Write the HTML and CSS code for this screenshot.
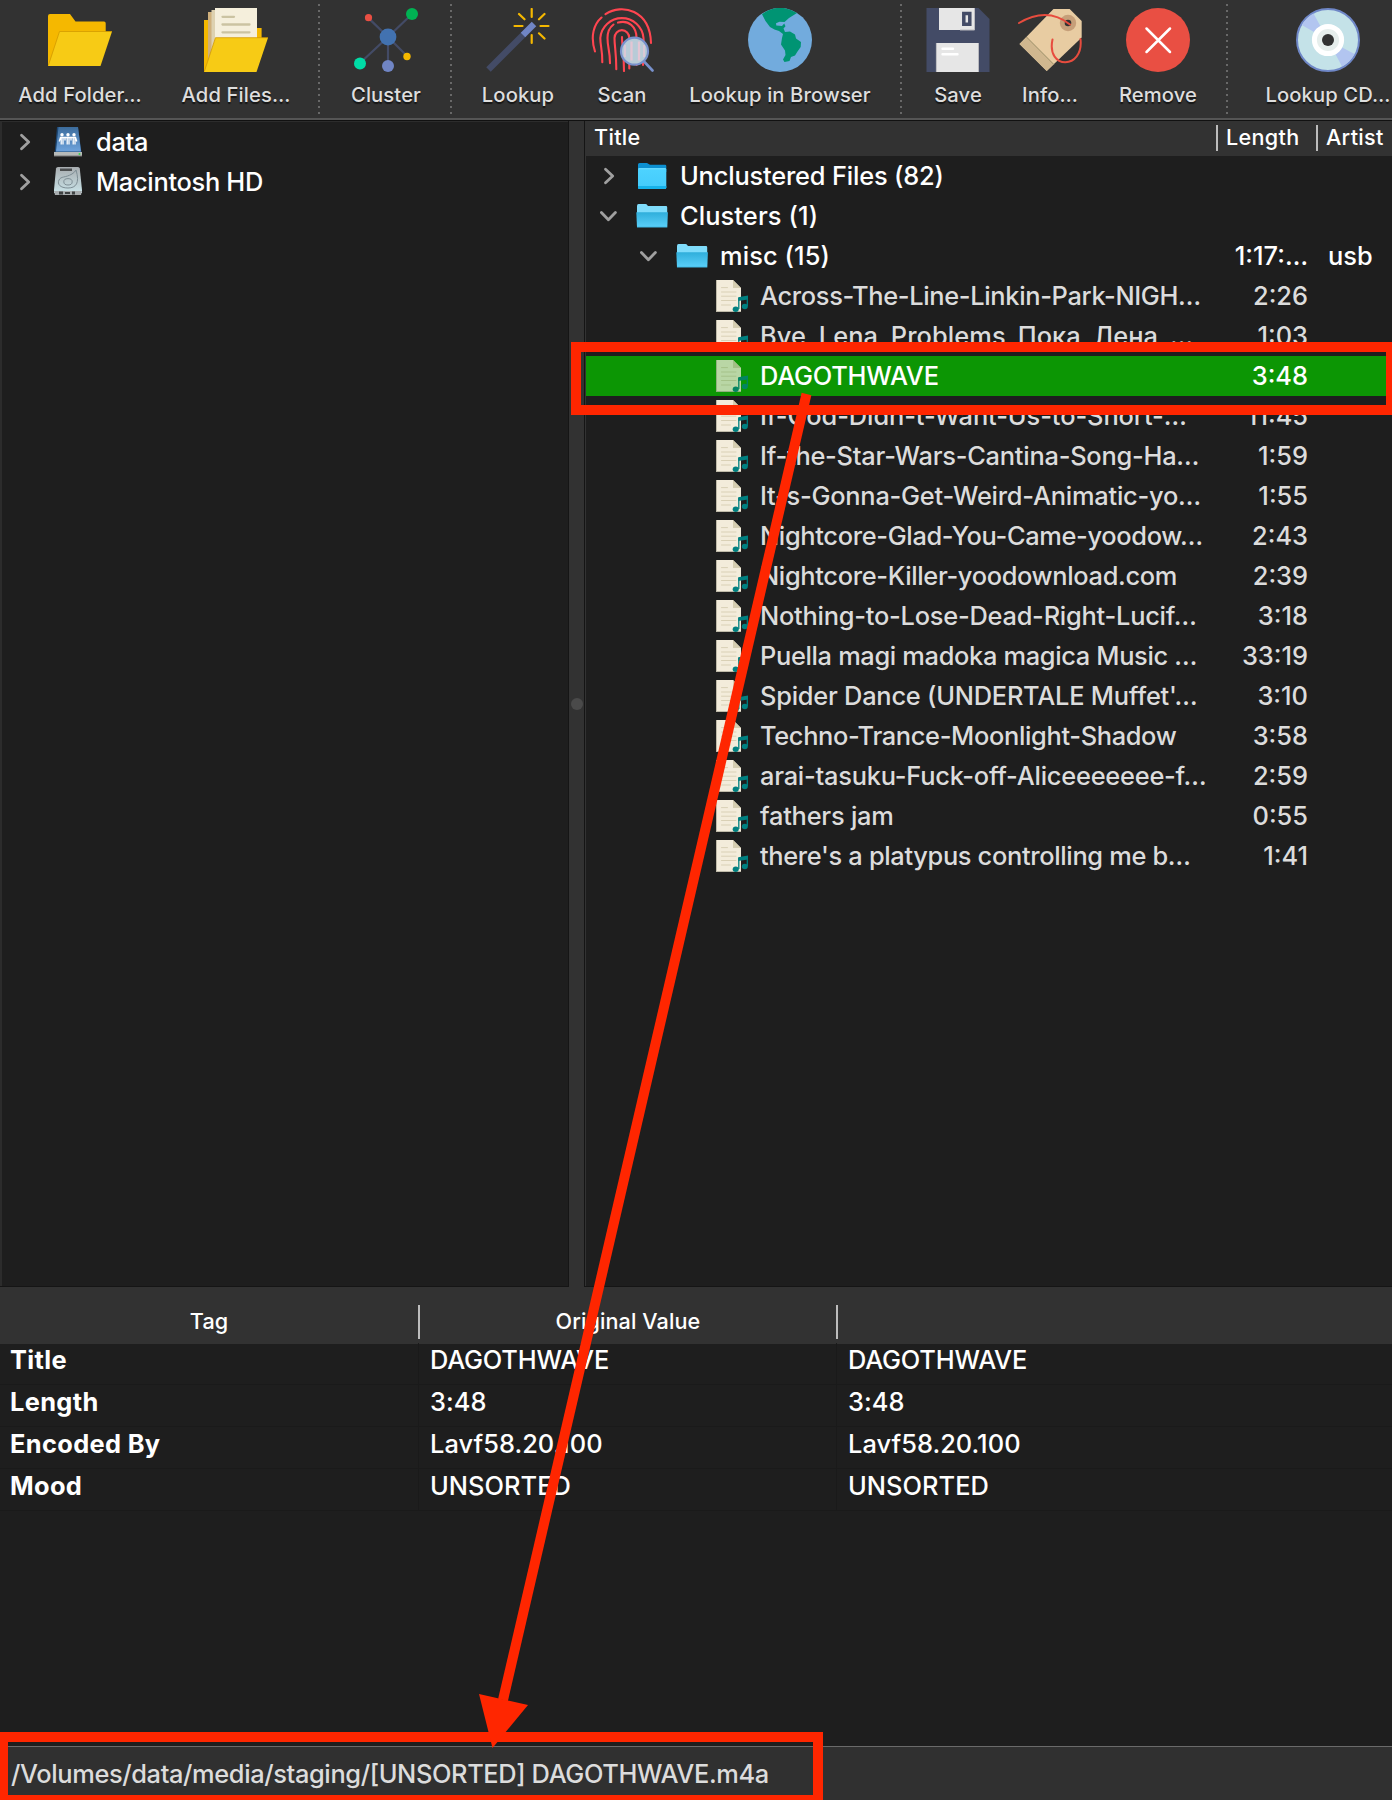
FILE: index.html
```html
<!DOCTYPE html>
<html lang="en">
<head>
<meta charset="utf-8">
<title>Tagger</title>
<link rel="stylesheet" href="styles.css">
</head>
<body>
<svg class="defs" width="0" height="0" aria-hidden="true">
  <symbol id="right" viewBox="0 0 18 18"><path d="M5.500 2.200 12.700 9 5.500 15.800" fill="none" stroke="#a0a0a0" stroke-width="2.800" stroke-linecap="round" stroke-linejoin="round"/></symbol>
  <symbol id="down" viewBox="0 0 18 18"><path d="M1.400 5.500 8.400 12.700 15.400 5.500" fill="none" stroke="#a0a0a0" stroke-width="2.800" stroke-linecap="round" stroke-linejoin="round"/></symbol>
  <symbol id="folder" viewBox="0 0 32 32"><path d="M2 4.500Q2 3 3.500 3H11l3 1.800H29Q30.300 4.800 30.300 6V12H2Z" fill="#0c8fd0"/><rect x="2" y="8" width="28.300" height="21" rx="1.500" fill="url(#blue)"/><path d="M2 26v1.500q0 1.500 1.500 1.500h25.300q1.500 0 1.500-1.500V26Z" fill="#16b2ea"/><path d="M2.500 8.800h27.300" stroke="#6fdcff"/></symbol>
  <symbol id="open" viewBox="0 0 32 32"><path d="M1 6q0-2 1.500-2H9.500q1.200 0 1.800 1.200.6.900 1.800.9H30q1.200 0 1.200 1.200V14H1Z" fill="#7fdcfb"/><path d="M.3 12.200H31.900L31.300 27.500H1Z" fill="url(#blue2)"/></symbol>
  <symbol id="song" viewBox="0 0 32 32"><path d="M0 0H17L25 8V32H0Z" fill="#f3ecdb"/><path d="M17 0 25 8H17Z" fill="#d5cdb0"/><path d="M0 31.500H25M.5 0V32" stroke="#aaa594" opacity=".7"/><path d="M5.500 7.600h6M5.500 12h14.500M5.500 16.200h14.500M5.500 20.500h14.500M5.500 25h9" stroke="#d9d0b5" stroke-width="1" stroke-linecap="round"/><path d="M22.800 29V18.600L31.300 16.800V26" fill="none" stroke="#008080" stroke-width="1.300"/><path d="M22.200 17.200 32 15.600V19.500L22.200 21Z" fill="#008080"/><ellipse cx="19.700" cy="29.200" rx="3" ry="2.700" fill="#008080"/><ellipse cx="28.800" cy="26.500" rx="3" ry="2.700" fill="#008080"/></symbol>
  <defs>
    <linearGradient id="blue" x2="0" y2="1"><stop stop-color="#4ed3ff"/><stop offset="1" stop-color="#43cbfb"/></linearGradient>
    <linearGradient id="blue2" x2="0" y2="1"><stop stop-color="#2faedb"/><stop offset=".9" stop-color="#57cdf7"/><stop offset="1" stop-color="#3ab4e0"/></linearGradient>
    <linearGradient id="share" x2="0" y2="1"><stop stop-color="#3c6c9c"/><stop offset="1" stop-color="#6ea3dc"/></linearGradient>
    <linearGradient id="disk" x2="0" y2="1"><stop stop-color="#a8adb0"/><stop offset="1" stop-color="#c9e3e8"/></linearGradient>
  </defs>
</svg>
<div class="window">
  <div class="toolbar">
    <div class="tool"><svg viewBox="0 0 64 64"><path d="M0 8q0-2 2-2H22l5.500 7.500H56q1.700 0 1.700 1.700V40L2 58H0Z" fill="#f5b800"/><path d="M11.500 23.500H64L52.500 58H.3Z" fill="#f7cb15"/><path d="M.3 57.500 11.500 23.500H64" fill="none" stroke="#d39b00" stroke-width=".8"/></svg><span>Add Folder…</span></div>
    <div class="tool"><svg viewBox="0 0 64 64"><path d="M0 12H10V20H57.600V40L2 64H0Z" fill="#f5b800"/><path d="M4 4H14V60H4Z" fill="#cfb07c"/><path d="M7.500 2H16V50H7.500Z" fill="#ddd1b0"/><path d="M11 0H53V40H11Z" fill="#f5efdc"/><path d="M18.500 8.800H30M18.500 16.500H45.500M18.500 24.300H45.500" stroke="#cbc3a2" stroke-width="2.300" stroke-linecap="round"/><path d="M11.500 29.700H64L52.500 64H.3Z" fill="#f7cb15"/><path d="M.3 63.500 11.500 29.700H64" fill="none" stroke="#d39b00" stroke-width=".8"/></svg><span>Add Files…</span></div>
    <i class="dots"></i>
    <div class="tool"><svg viewBox="0 0 64 64"><path d="M14 9.600 34 29 53 48M58 6 34 29 6 55M34 29V58" fill="none" stroke="#434b66" stroke-width="2.200"/><circle cx="34" cy="29" r="8.400" fill="#4272b0"/><circle cx="14.500" cy="9.700" r="3.600" fill="#e94f43"/><circle cx="58" cy="6" r="6" fill="#00b253"/><circle cx="53" cy="48.500" r="3.700" fill="#f5b800"/><circle cx="6" cy="55.500" r="6" fill="#00dca6"/><circle cx="34" cy="58" r="6" fill="#7085c4"/></svg><span>Cluster</span></div>
    <i class="dots"></i>
    <div class="tool"><svg viewBox="0 0 64 64"><path d="M2.500 61.500 38 26" stroke="#434b66" stroke-width="6.400"/><path d="M37 27 48 16" stroke="#7085c4" stroke-width="6.400"/><path d="M45.700 1V9M45.700 27V35M28.500 18H36.500M54.500 18H62.500M33 6 38.500 11.300M58.500 6 53 11.300M53 25.300 58.500 30.500" stroke="#f5b800" stroke-width="2.200" stroke-linecap="round"/></svg><span>Lookup</span></div>
    <div class="tool"><svg viewBox="0 0 64 64"><g fill="none" stroke="#ff4550" stroke-width="2.100" stroke-linecap="round"><path d="M5 43.500C0 28 4 16 11.500 9.500M15.500 6.200C32-5 60 2 61 35"/><path d="M12.300 54.300C12.500 42 10.300 38 10.300 30A21.700 22 0 0 1 53.500 30C54 35 53 48 53 57"/><path d="M20 55.300C20 42 17.500 40 17.500 30Q17.500 21 23.500 16.500M28 14.600C39 11.500 46.500 19 46.500 30V57"/><path d="M26.300 61.300C26.300 44 24.500 39 24.500 30A7.300 7.800 0 0 1 39.300 30V60.500M32 29C32 38 34 45 34 63"/></g><circle cx="44.500" cy="43.200" r="13.200" fill="#b8cbd7"/><path d="M41.500 33.500v19M49 33.500v19" stroke="#e4c6d4" stroke-width="2.300"/><path d="M35 37v12M54 37v12" stroke="#dac8d6" stroke-width="2"/><circle cx="44.500" cy="43.200" r="13.500" fill="none" stroke="#7891cc" stroke-width="2.200"/><path d="M54.500 54 62.500 62.500" stroke="#7891cc" stroke-width="2.600" stroke-linecap="round"/></svg><span>Scan</span></div>
    <div class="tool"><svg viewBox="0 0 64 64"><circle cx="32" cy="32" r="32" fill="#72abdd"/><path d="M14 6.200Q31-6 49 5L41 10 36.500 14 31.500 13.700 28 15.200 28.300 17.500 34 18 36.200 15.500 37.500 18.200 35.500 20.500 37 24 42 23.500 47 26.500 48 30.500 53 34 52.700 39 49.500 43.500 47 47.500 43 49 41.500 53 36.500 54 35 51.500 37.500 47 37 42.500 33 36.500 34 30 35 26 31 23 26.500 21.500 22 19 17.500 13Z" fill="#009473"/></svg><span>Lookup in Browser</span></div>
    <i class="dots"></i>
    <div class="tool"><svg viewBox="0 0 64 64"><path d="M.5 0H52.500L63.500 11V64H.5Z" fill="#434b66"/><path d="M13 0H49V22H13ZM10 35H53V64H10Z" fill="#e6e6e6"/><path d="M48.500 0V22H34M52.500 35V64M10.400 35V64" fill="none" stroke="#b9b9be"/><path d="M37.800 5.500H43.800V16.300H37.800Z" fill="none" stroke="#434b66" stroke-width="3.500"/><path d="M16.500 40.700H27M16.500 46.200H31.500" stroke="#fff" stroke-width="2.400" stroke-linecap="round"/></svg><span>Save</span></div>
    <div class="tool"><svg viewBox="0 0 64 64"><path d="M35.500 1H51.700L63.700 13V29.500L28.700 63 1.500 36Z" fill="#e8cca2"/><path d="M8.500 29 35.700 56.300 28.700 63 1.500 36Z" fill="#d0b78f"/><path d="M8.500 29 35.700 56.300" stroke="#9c9069"/><circle cx="50" cy="15" r="8.200" fill="#c69f79"/><circle cx="50" cy="15" r="3.300" fill="#323232"/><path d="M1 15C18 5 35 3 52 16.500M34.500 31.500C28 62 66 62 62.500 31" fill="none" stroke="#e74c3e" stroke-width="2" stroke-linecap="round"/></svg><span>Info…</span></div>
    <div class="tool"><svg viewBox="0 0 64 64"><circle cx="32" cy="32" r="32" fill="#e94f43"/><path d="M20.500 20.500 44 44M44 20.500 20.500 44" stroke="#fff" stroke-width="2.500" stroke-linecap="round"/></svg><span>Remove</span></div>
    <i class="dots"></i>
    <div class="tool"><svg viewBox="0 0 64 64"><circle cx="32" cy="32" r="31" fill="#c4e2e8" stroke="#6f87c7" stroke-width="2"/><path d="M32 32 17.500 5.500A30 30 0 0 0 5.800 17ZM32 32 46 58.500A30 30 0 0 0 58.500 46Z" fill="#b2c5f0"/><circle cx="32" cy="32" r="13.600" fill="#e6eeec" stroke="#fff" stroke-width="5"/><circle cx="32" cy="32" r="6" fill="#323232"/></svg><span>Lookup CD…</span></div>
  </div>

  <div class="main">
    <div class="files">
      <div class="node"><svg class="chev"><use href="#right"/></svg><svg class="ico" viewBox="0 0 32 32"><path d="M5 1H26L29 23L30 30H2L3 23Z" fill="#1c4672"/><path d="M6.500 1H26L29 25.500H4Z" fill="url(#share)"/><path d="M2 26H30V30H2Z" fill="#b7bab8"/><path d="M2 30H30" stroke="#777"/><circle cx="27.500" cy="28" r="1" fill="#35d34b"/><g fill="#fff"><circle cx="10" cy="8.800" r="1.700"/><circle cx="16" cy="8.800" r="1.700"/><circle cx="22" cy="8.800" r="1.700"/></g><path d="M7.200 15.500 8.500 11.500H23.500L24.800 15.500M13 14.500V11.500M19 14.500V11.500M9.200 11.500V18.500M11 11.500V18.500M15.200 11.500V18.500M17 11.500V18.500M21.200 11.500V18.500M23 11.500V18.500" stroke="#fff" stroke-width="1.300" fill="none"/></svg><span>data</span></div>
      <div class="node"><svg class="chev"><use href="#right"/></svg><svg class="ico" viewBox="0 0 32 32"><path d="M6 1H26Q27.500 1 27.800 2.500L30 24V27H2V24L4 2.500Q4.300 1 6 1Z" fill="url(#disk)"/><path d="M8 2.500H20V5H8Z" fill="#4c4f50"/><path d="M2 25H30L29 29H3Z" fill="#a8adaf"/><path d="M7 25.500h4v3h-4zM13 26h5v2h-5zM20 25.500h3v3h-3z" fill="#3f4344"/><path d="M24 4C28 17 24 22 16 22 8 22 5 18 7 14 9 10 13 12 20 8Q23 6 24 4" fill="none" stroke="#7e8e95" stroke-width="1"/><ellipse cx="16" cy="15.800" rx="4.200" ry="3.200" fill="none" stroke="#7e8e95"/></svg><span>Macintosh HD</span></div>
    </div>
    <div class="splitter"><i></i></div>
    <div class="clusters">
      <div class="head"><span>Title</span><span class="bar">Length</span><span class="bar">Artist</span></div>
      <div class="row"><div class="cell"><svg class="chev"><use href="#right"/></svg><svg class="ico"><use href="#folder"/></svg><span>Unclustered Files (82)</span></div></div>
      <div class="row"><div class="cell"><svg class="chev"><use href="#down"/></svg><svg class="ico"><use href="#open"/></svg><span class="loose">Clusters (1)</span></div></div>
      <div class="row"><div class="cell sub"><svg class="chev"><use href="#down"/></svg><svg class="ico"><use href="#open"/></svg><span class="loose">misc (15)</span></div><b>1:17:…</b><em>usb</em></div>
      <div class="row song"><div class="cell"><svg class="ico"><use href="#song"/></svg><span class="tight">Across-The-Line-Linkin-Park-NIGH…</span></div><b>2:26</b></div>
      <div class="row song"><div class="cell"><svg class="ico"><use href="#song"/></svg><span class="loose">Bye_Lena_Problems_Пока_Лена_…</span></div><b>1:03</b></div>
      <div class="row song selected"><div class="cell"><svg class="ico"><use href="#song"/></svg><span>DAGOTHWAVE</span></div><b>3:48</b></div>
      <div class="row song"><div class="cell"><svg class="ico"><use href="#song"/></svg><span class="even">If-God-Didn-t-Want-Us-to-Short-…</span></div><b>11:45</b></div>
      <div class="row song"><div class="cell"><svg class="ico"><use href="#song"/></svg><span>If-the-Star-Wars-Cantina-Song-Ha…</span></div><b>1:59</b></div>
      <div class="row song"><div class="cell"><svg class="ico"><use href="#song"/></svg><span>It-s-Gonna-Get-Weird-Animatic-yo…</span></div><b>1:55</b></div>
      <div class="row song"><div class="cell"><svg class="ico"><use href="#song"/></svg><span class="tight">Nightcore-Glad-You-Came-yoodow…</span></div><b>2:43</b></div>
      <div class="row song"><div class="cell"><svg class="ico"><use href="#song"/></svg><span class="tight">Nightcore-Killer-yoodownload.com</span></div><b>2:39</b></div>
      <div class="row song"><div class="cell"><svg class="ico"><use href="#song"/></svg><span>Nothing-to-Lose-Dead-Right-Lucif…</span></div><b>3:18</b></div>
      <div class="row song"><div class="cell"><svg class="ico"><use href="#song"/></svg><span class="tight">Puella magi madoka magica Music …</span></div><b>33:19</b></div>
      <div class="row song"><div class="cell"><svg class="ico"><use href="#song"/></svg><span>Spider Dance (UNDERTALE Muffet'…</span></div><b>3:10</b></div>
      <div class="row song"><div class="cell"><svg class="ico"><use href="#song"/></svg><span class="tight">Techno-Trance-Moonlight-Shadow</span></div><b>3:58</b></div>
      <div class="row song"><div class="cell"><svg class="ico"><use href="#song"/></svg><span>arai-tasuku-Fuck-off-Aliceeeeeee-f…</span></div><b>2:59</b></div>
      <div class="row song"><div class="cell"><svg class="ico"><use href="#song"/></svg><span>fathers jam</span></div><b>0:55</b></div>
      <div class="row song"><div class="cell"><svg class="ico"><use href="#song"/></svg><span class="tight">there's a platypus controlling me b…</span></div><b>1:41</b></div>
    </div>
  </div>

  <div class="tags">
    <div class="taghead"><span>Tag</span><span>Original Value</span><span></span></div>
    <div class="tag"><b>Title</b><span>DAGOTHWAVE</span><span>DAGOTHWAVE</span></div>
    <div class="tag"><b>Length</b><span class="num">3:48</span><span class="num">3:48</span></div>
    <div class="tag"><b>Encoded By</b><span class="num">Lavf58.20.100</span><span class="num">Lavf58.20.100</span></div>
    <div class="tag"><b>Mood</b><span class="num">UNSORTED</span><span class="num">UNSORTED</span></div>
  </div>
  <div class="status">/Volumes/data/media/staging/[UNSORTED] DAGOTHWAVE.m4a</div>

  <svg class="notes" viewBox="0 0 1392 1800">
    <g fill="none" stroke="#ff2600" stroke-width="10">
      <path d="M576 347H1391V410H576Z"/>
      <path d="M3 1737H818V1800H3Z"/>
      <path d="M806.500 394 503 1700"/>
    </g>
    <path d="M479 1694 528 1705 492.500 1748Z" fill="#ff2600"/>
  </svg>
</div>
</body>
</html>
```
FILE: styles.css
```css
* { box-sizing: border-box; }
body {
  margin: 0;
  background: #1e1e1e;
  color: #fff;
  font: 450 25.4px/40px Inter, "Liberation Sans", sans-serif;
}
.defs { display: block; height: 0; }
b, em { font-weight: inherit; font-style: normal; }
.window {
  position: relative;
  display: flex;
  flex-direction: column;
  width: 1392px;
  height: 1800px;
  overflow: hidden;
}

.toolbar {
  display: grid;
  grid-template-columns: 156px 156px 12px 120px 10px 124px 84px 232px 14px 96px 88px 128px 42px 128px;
  flex: none;
  height: 121px;
  padding-left: 2px;
  background: #323232;
  border-bottom: 1px solid #111;
  box-shadow: inset 0 -2px #555;
}
.tool {
  display: flex;
  flex-direction: column;
  align-items: center;
  padding-top: 8px;
  font-size: 20.2px;
  line-height: 26px;
  font-weight: 500;
  letter-spacing: .12px;
  color: #dedede;
  white-space: nowrap;
  text-shadow: 0 2px 1px #151515;
}
.tool svg { width: 64px; height: 64px; flex: none; margin-bottom: 10px; }
.dots {
  width: 2px;
  height: 110px;
  margin: 4px 0 0 4px;
  background: repeating-linear-gradient(#686868 0 2px, transparent 2px 6px);
}

.main { display: flex; flex: none; height: 1166px; }
.files {
  width: 569px;
  padding-top: 1px;
  border: solid #151515;
  border-width: 0 1px 1px 0;
  box-shadow: inset 2px 0 #2c2c2c, inset 0 1px #2c2c2c;
  letter-spacing: -.3px;
}
.node { display: flex; align-items: center; height: 40px; padding-left: 16px; }
.chev { width: 18px; height: 18px; flex: none; }
.ico { width: 32px; height: 32px; flex: none; }
.chev + .ico { margin: 0 12px 0 18px; }
.splitter {
  display: flex;
  align-items: center;
  justify-content: center;
  width: 15px;
  background: #323232;
}
.splitter i { width: 12px; height: 12px; border-radius: 50%; background: #4a4a4a; }
.clusters {
  flex: 1;
  border: solid #151515;
  border-width: 0 0 1px 1px;
  box-shadow: inset 1px 0 #333;
}
.head, .row { display: grid; grid-template-columns: 631px 100px 1fr; white-space: nowrap; }
.head {
  height: 35px;
  padding-top: 4px;
  background: #323232;
  font-size: 21.6px;
  line-height: 25px;
  font-weight: 500;
  letter-spacing: .3px;
}
.head span { padding-left: 9px; }
.head .bar { height: 26px; padding-left: 8px; border-left: 2px solid #bcbcbc; }
.row { height: 40px; margin-left: 1px; grid-template-columns: 630px 100px 1fr; }
.cell { display: flex; align-items: center; padding-left: 14px; letter-spacing: -.18px; }
.sub { padding-left: 54px; }
.row b { padding-right: 8px; text-align: right; }
.row em { padding-left: 12px; }
.song { color: #dcdcdc; }
.song .cell { padding-left: 130px; letter-spacing: -.23px; }
.song .ico { margin-right: 12px; }
.row .tight { letter-spacing: -.33px; }
.row .even { letter-spacing: -.08px; }
.row .loose { letter-spacing: .1px; }
.selected { background: #0c9604; color: #fff; }
.selected .ico { opacity: .75; }

.tags { flex: 1; background: #1e1e1e; }
.taghead, .tag { display: grid; grid-template-columns: 418px 418px 1fr; }
.taghead {
  height: 57px;
  padding-top: 18px;
  background: #323232;
  text-align: center;
  font-size: 21.6px;
  line-height: 33px;
  letter-spacing: .1px;
}
.taghead span { height: 34px; }
.taghead span + span { border-left: 2px solid #bcbcbc; }
.tag { height: 42px; margin-top: -1px; line-height: 34px; letter-spacing: -.2px; }
.tag + .tag { margin-top: 0; }
.tag > * { padding-left: 11px; border-bottom: 1px solid #1a1a1a; }
.tag > span { border-left: 1px solid #1a1a1a; }
.tag .num { letter-spacing: .05px; }
.tag b { padding-left: 10px; font-weight: 700; letter-spacing: .35px; }
.status {
  height: 54px;
  padding: 3px 0 0 11px;
  flex: none;
  border-top: 1px solid #6a6a6a;
  background: #303030;
  color: #dcdcdc;
  line-height: 47px;
  letter-spacing: -.37px;
  white-space: nowrap;
}
.notes { position: absolute; inset: 0; width: 1392px; height: 1800px; }
```
